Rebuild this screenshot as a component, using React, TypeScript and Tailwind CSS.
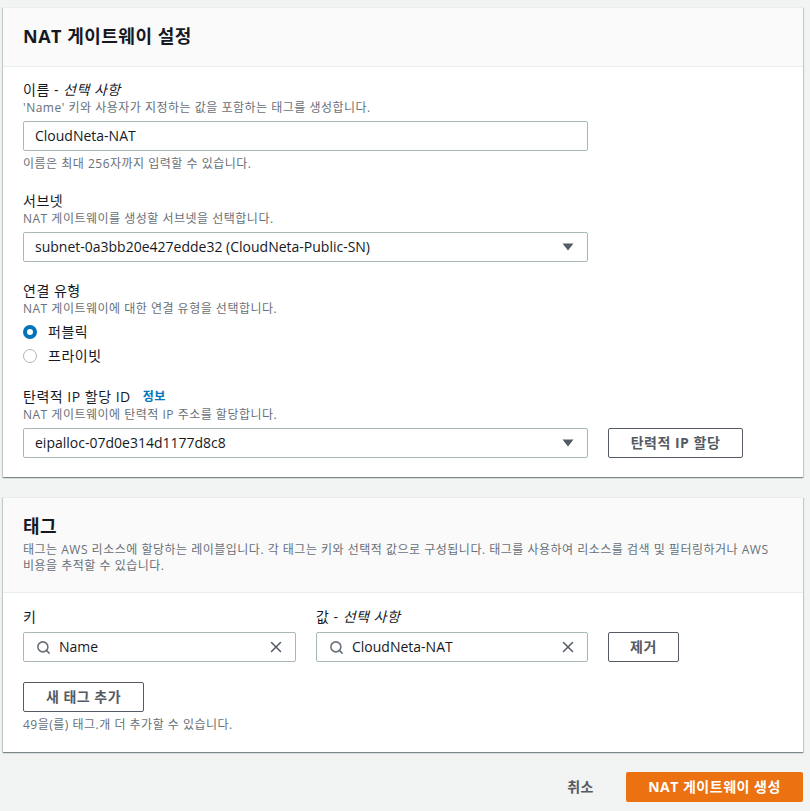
import { Search, X } from "lucide-react";
import type { ReactNode } from "react";

const Caret = () => (
  <svg width="12" height="8" viewBox="0 0 12 8" className="shrink-0">
    <path d="M0.5 0.5H11.5L6 7.5Z" fill="#545b64" />
  </svg>
);

function Field({
  label,
  desc,
  children,
}: {
  label: ReactNode;
  desc: string;
  children: ReactNode;
}) {
  return (
    <div className="flex flex-col">
      <div className="text-sm leading-5 tracking-[0.5px] text-[#16191f]">{label}</div>
      <div className="text-xs leading-4 tracking-[0.5px] text-[#687078]">{desc}</div>
      {children}
    </div>
  );
}

function Radio({ checked, label }: { checked?: boolean; label: string }) {
  return (
    <div className="flex h-6 items-center gap-[11px]">
      {checked ? (
        <span className="h-[14px] w-[14px] rounded-full border-[4px] border-[#0073bb] bg-white" />
      ) : (
        <span className="h-[14px] w-[14px] rounded-full border-[1.5px] border-[#aab7b8] bg-white" />
      )}
      <span className="text-sm tracking-[0.5px] text-[#16191f]">{label}</span>
    </div>
  );
}

const panel =
  "bg-white border-t border-[#eaeded] shadow-[0_1px_1px_0_rgba(0,28,36,0.3),1px_1px_1px_0_rgba(0,28,36,0.15),-1px_1px_1px_0_rgba(0,28,36,0.15)]";

export default function App() {
  return (
    <div className="min-h-screen bg-[#f2f3f3] font-['Open_Sans','Noto_Sans_CJK_KR',sans-serif] text-[#16191f]">
      <div className="ml-[3px] w-[800px] pt-[7px]">
        {/* NAT gateway settings */}
        <section className={panel}>
          <div className="border-b border-[#eaeded] bg-[#fafafa] px-5 pt-[17px] pb-[19px]">
            <h2 className="text-lg leading-[22px] font-bold tracking-[0.5px]">NAT 게이트웨이 설정</h2>
          </div>
          <div className="flex flex-col gap-[19px] px-5 pt-[13px] pb-[19px]">
            <Field
              label={
                <>
                  이름 - <i>선택 사항</i>
                </>
              }
              desc="'Name' 키와 사용자가 지정하는 값을 포함하는 태그를 생성합니다."
            >
              <div className="mt-[5px] flex h-[30px] w-[565px] items-center rounded-[2px] border border-[#aab7b8] px-[11px] text-sm">
                CloudNeta-NAT
              </div>
              <div className="mt-[5px] text-xs leading-4 tracking-[0.5px] text-[#687078]">
                이름은 최대 256자까지 입력할 수 있습니다.
              </div>
            </Field>

            <Field label="서브넷" desc="NAT 게이트웨이를 생성할 서브넷을 선택합니다.">
              <div className="mt-[5px] flex h-[30px] w-[565px] items-center justify-between rounded-[2px] border border-[#aab7b8] pr-[13px] pl-[11px] text-sm">
                <span>subnet-0a3bb20e427edde32 (CloudNeta-Public-SN)</span>
                <Caret />
              </div>
            </Field>

            <Field label="연결 유형" desc="NAT 게이트웨이에 대한 연결 유형을 선택합니다.">
              <div className="mt-[3px] flex flex-col">
                <Radio checked label="퍼블릭" />
                <Radio label="프라이빗" />
              </div>
            </Field>

            <Field
              label={
                <span className="flex items-center gap-3">
                  탄력적 IP 할당 ID
                  <span className="text-xs font-bold text-[#0073bb]">정보</span>
                </span>
              }
              desc="NAT 게이트웨이에 탄력적 IP 주소를 할당합니다."
            >
              <div className="mt-[5px] flex items-center gap-5">
                <div className="flex h-[30px] w-[565px] items-center justify-between rounded-[2px] border border-[#aab7b8] pr-[13px] pl-[11px] text-sm">
                  <span>eipalloc-07d0e314d1177d8c8</span>
                  <Caret />
                </div>
                <button className="h-[30px] w-[135px] rounded-[2px] border border-[#545b64] text-sm font-bold tracking-[0.5px] text-[#545b64]">
                  탄력적 IP 할당
                </button>
              </div>
            </Field>
          </div>
        </section>

        {/* Tags */}
        <section className={`mt-5 ${panel}`}>
          <div className="border-b border-[#eaeded] bg-[#fafafa] px-5 pt-[17px] pb-[18px]">
            <h2 className="text-lg leading-[22px] font-bold tracking-[0.5px]">태그</h2>
            <p className="mt-[5px] text-xs leading-4 tracking-[0.5px] text-[#687078]">
              <span className="whitespace-nowrap">
                태그는 AWS 리소스에 할당하는 레이블입니다. 각 태그는 키와 선택적 값으로 구성됩니다. 태그를 사용하여 리소스를 검색 및 필터링하거나 AWS
              </span>
              <br />
              비용을 추적할 수 있습니다.
            </p>
          </div>
          <div className="px-5 pt-[14px] pb-[19px]">
            <div className="flex items-end gap-5">
              <div className="flex w-[273px] flex-col">
                <span className="text-sm leading-5">키</span>
                <div className="mt-[5px] flex h-[30px] items-center rounded-[2px] border border-[#aab7b8] pr-[10px] pl-[12px] text-sm">
                  <Search size={15} strokeWidth={2.5} color="#687078" />
                  <span className="ml-[8px] flex-1">Name</span>
                  <X size={18} strokeWidth={2} color="#545b64" />
                </div>
              </div>
              <div className="flex w-[272px] flex-col">
                <span className="text-sm leading-5 tracking-[0.5px]">
                  값 - <i>선택 사항</i>
                </span>
                <div className="mt-[5px] flex h-[30px] items-center rounded-[2px] border border-[#aab7b8] pr-[10px] pl-[12px] text-sm">
                  <Search size={15} strokeWidth={2.5} color="#687078" />
                  <span className="ml-[8px] flex-1">CloudNeta-NAT</span>
                  <X size={18} strokeWidth={2} color="#545b64" />
                </div>
              </div>
              <button className="h-[30px] w-[71px] rounded-[2px] border border-[#545b64] text-sm font-bold tracking-[0.5px] text-[#545b64]">
                제거
              </button>
            </div>
            <button className="mt-5 h-[30px] w-[121px] rounded-[2px] border border-[#545b64] text-sm font-bold tracking-[0.5px] text-[#545b64]">
              새 태그 추가
            </button>
            <div className="mt-[5px] text-xs leading-4 tracking-[0.5px] text-[#687078]">
              49을(를) 태그.개 더 추가할 수 있습니다.
            </div>
          </div>
        </section>

        {/* Footer actions */}
        <div className="mt-5 flex items-center justify-end">
          <button className="mr-[32px] text-sm font-bold tracking-[0.5px] text-[#545b64]">취소</button>
          <button className="h-[30px] w-[177px] rounded-[2px] bg-[#ec7211] text-sm font-bold tracking-[0.5px] text-white">
            NAT 게이트웨이 생성
          </button>
        </div>
      </div>
    </div>
  );
}
